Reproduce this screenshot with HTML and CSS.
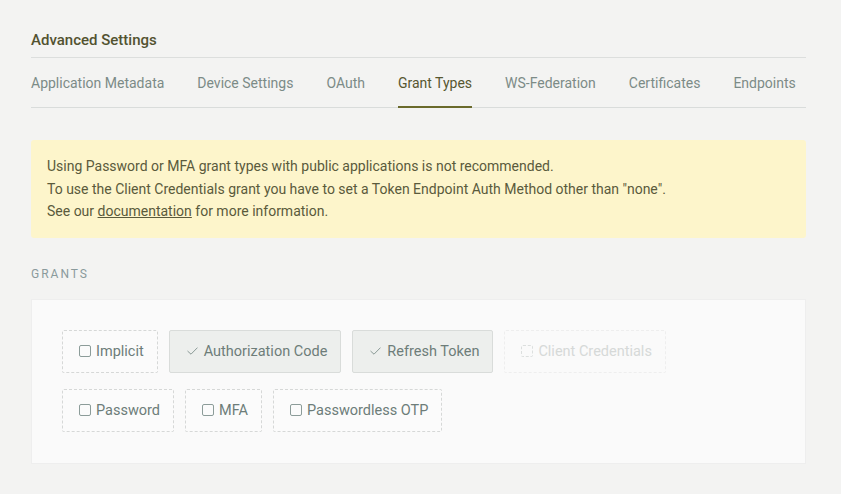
FILE: index.html
```html
<!DOCTYPE html>
<html>
<head>
<meta charset="utf-8">
<link rel="stylesheet" href="styles.css">
</head>
<body>
<div class="page">
  <h2 class="section-title">Advanced Settings</h2>
  <nav class="tabs">
    <span class="tab">Application Metadata</span>
    <span class="tab">Device Settings</span>
    <span class="tab">OAuth</span>
    <span class="tab active">Grant Types</span>
    <span class="tab">WS-Federation</span>
    <span class="tab">Certificates</span>
    <span class="tab">Endpoints</span>
  </nav>
  <div class="alert">
    <p>Using Password or MFA grant types with public applications is not recommended.</p>
    <p>To use the Client Credentials grant you have to set a Token Endpoint Auth Method other than "none".</p>
    <p>See our <a href="#">documentation</a> for more information.</p>
  </div>
  <div class="label">GRANTS</div>
  <div class="panel">
    <div class="grants">
      <div class="grant"><span class="box"></span>Implicit</div>
      <div class="grant checked"><svg class="check" width="11" height="8" viewBox="0 0 11 8"><path d="M0.5 4 L4 7.2 L10.5 0.6" fill="none" stroke="#8a9a96" stroke-width="1"/></svg>Authorization Code</div>
      <div class="grant checked"><svg class="check" width="11" height="8" viewBox="0 0 11 8"><path d="M0.5 4 L4 7.2 L10.5 0.6" fill="none" stroke="#8a9a96" stroke-width="1"/></svg>Refresh Token</div>
      <div class="grant disabled"><span class="box"></span>Client Credentials</div>
    </div>
    <div class="grants">
      <div class="grant"><span class="box"></span>Password</div>
      <div class="grant"><span class="box"></span>MFA</div>
      <div class="grant"><span class="box"></span>Passwordless OTP</div>
    </div>
  </div>
</div>
</body>
</html>
```
FILE: styles.css
```css
html, body {
  margin: 0;
  padding: 0;
}
body {
  background: #f3f3f2;
  font-family: Roboto, "Liberation Sans", sans-serif;
  width: 841px;
  height: 494px;
  overflow: hidden;
}
.page {
  padding: 0 35px 0 31px;
  width: 775px;
}
.section-title {
  margin: 0;
  padding-top: 31px;
  padding-bottom: 8px;
  font-size: 15px;
  line-height: 18px;
  font-weight: 500;
  color: #525230;
  border-bottom: 1px solid #dcdedd;
}
.tabs {
  display: flex;
  gap: 33px;
  border-bottom: 1px solid #d9dcdb;
}
.tab {
  font-size: 14px;
  line-height: 17px;
  padding: 17px 0 14px;
  color: #7c8b87;
  border-bottom: 2px solid transparent;
  margin-bottom: -1px;
}
.tab.active {
  color: #575730;
  border-bottom-color: #6a6a2c;
}
.alert {
  margin-top: 32px;
  background: #fdf5cb;
  border-radius: 3px;
  padding: 15px 16px 15px;
  color: #5a5a3c;
  font-size: 14px;
  line-height: 22.5px;
}
.alert p {
  margin: 0;
}
.alert a {
  color: inherit;
  text-decoration: underline;
}
.label {
  margin-top: 29px;
  font-size: 12px;
  line-height: 14px;
  letter-spacing: 2px;
  color: #8a9a9c;
}
.panel {
  margin-top: 18px;
  background: #fafafa;
  border: 1px solid #eeeeee;
  padding: 30px 30px 31px;
  display: flex;
  flex-direction: column;
  gap: 16px;
}
.grants {
  display: flex;
  gap: 11px;
}
.grant {
  display: flex;
  align-items: center;
  height: 43px;
  box-sizing: border-box;
  padding: 0 13px 0 16px;
  border: 1px dashed #d6d8d7;
  border-radius: 2px;
  font-size: 14.5px;
  color: #6d7d79;
  background: #fbfbfb;
}
.box {
  width: 10px;
  height: 10px;
  border: 1px solid #8c9c99;
  border-radius: 2px;
  margin-right: 5px;
}
.grant.checked {
  background: #edefed;
  border: 1px solid #d9dcda;
  padding-left: 17px;
}
.check {
  margin-right: 6px;
}
.grant.disabled {
  color: #d6d9d8;
  border-color: #eeeeee;
  background: transparent;
}
.grant.disabled .box {
  border-color: #dcdfde;
  border-style: dashed;
}
```
